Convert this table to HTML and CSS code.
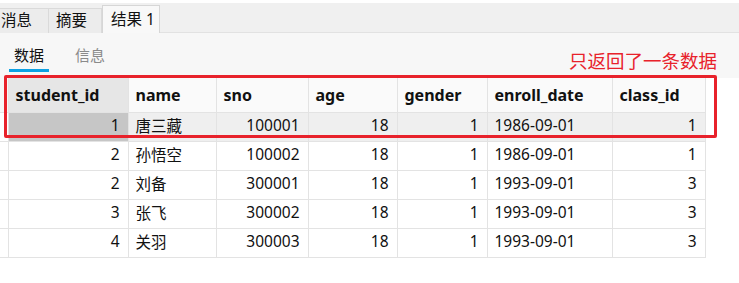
FILE: index.html
```html
<!DOCTYPE html>
<html lang="zh-CN">
<head>
<meta charset="utf-8">
<link rel="stylesheet" href="styles.css">
</head>
<body>
<div class="page">
  <div class="tabbar">
    <div class="tab tab-first">消息</div>
    <div class="tab">摘要</div>
    <div class="tab tab-active">结果 1</div>
  </div>
  <div class="panel">
    <div class="subtabs">
      <div class="subtab subtab-active">数据</div>
      <div class="subtab">信息</div>
    </div>
    <div class="note">只返回了一条数据</div>
  </div>
  <div class="gridwrap">
    <table class="grid">
      <colgroup>
        <col class="c-rh"><col class="c-id"><col class="c-name"><col class="c-sno"><col class="c-age"><col class="c-gender"><col class="c-date"><col class="c-class">
      </colgroup>
      <thead>
        <tr>
          <th class="rh"></th>
          <th class="sorted">student_id</th>
          <th>name</th>
          <th>sno</th>
          <th>age</th>
          <th>gender</th>
          <th>enroll_date</th>
          <th>class_id</th>
        </tr>
      </thead>
      <tbody>
        <tr class="sel">
          <td class="rh"></td>
          <td class="num cur">1</td><td>唐三藏</td><td class="num">100001</td><td class="num">18</td><td class="num">1</td><td>1986-09-01</td><td class="num">1</td>
        </tr>
        <tr>
          <td class="rh"></td>
          <td class="num">2</td><td>孙悟空</td><td class="num">100002</td><td class="num">18</td><td class="num">1</td><td>1986-09-01</td><td class="num">1</td>
        </tr>
        <tr>
          <td class="rh"></td>
          <td class="num">2</td><td>刘备</td><td class="num">300001</td><td class="num">18</td><td class="num">1</td><td>1993-09-01</td><td class="num">3</td>
        </tr>
        <tr>
          <td class="rh"></td>
          <td class="num">3</td><td>张飞</td><td class="num">300002</td><td class="num">18</td><td class="num">1</td><td>1993-09-01</td><td class="num">3</td>
        </tr>
        <tr>
          <td class="rh"></td>
          <td class="num">4</td><td>关羽</td><td class="num">300003</td><td class="num">18</td><td class="num">1</td><td>1993-09-01</td><td class="num">3</td>
        </tr>
      </tbody>
    </table>
    <div class="highlight"></div>
  </div>
</div>
</body>
</html>
```
FILE: styles.css
```css
* { box-sizing: border-box; }
html, body { margin: 0; padding: 0; background: #ffffff; }
body {
  font-family: "Noto Sans", "Noto Sans CJK SC", sans-serif;
  font-size: 15px;
  color: #111;
}
.page { width: 739px; height: 283px; position: relative; overflow: hidden; }

.tabbar {
  margin-top: 3px;
  height: 30px;
  background: #f0f0f0;
  display: flex;
  align-items: flex-end;
  border-bottom: 1px solid #e2e2e2;
}
.tab {
  height: 25px;
  padding: 0 7px;
  display: flex;
  align-items: center;
  background: #ececec;
  border: 1px solid #dadada;
  border-bottom: none;
  border-left: none;
  line-height: 1;
  font-size: 15.5px;
  color: #111;
  white-space: nowrap;
  margin-bottom: -1px;
  flex: none;
}
.tab-first { width: 49px; padding-left: 1px; }
.tab:nth-child(2) { width: 53px; }
.tab-active {
  width: 58px;
  height: 28px;
  background: #f8f8f8;
  border-left: 1px solid #dadada;
  border-color: #d6d6d6;
  padding-left: 8px;
  padding-right: 4px;
}

.panel {
  height: 45px;
  background: #f7f7f7;
  display: flex;
  justify-content: space-between;
  align-items: flex-start;
}
.subtabs { display: flex; padding-left: 9px; }
.subtab {
  height: 39px;
  padding: 15px 5px 0 5px;
  width: 40px;
  text-align: center;
  color: #8a8a8a;
  line-height: 1;
  margin-right: 21px;
  white-space: nowrap;
}
.subtab-active {
  color: #111;
  border-bottom: 3px solid #0ea1e3;
}
.note {
  color: #e8222b;
  font-size: 18.5px;
  line-height: 1;
  padding-top: 18px;
  padding-right: 22px;
  font-family: "Noto Sans CJK SC", sans-serif;
}

.gridwrap { position: relative; }
.grid {
  border-collapse: collapse;
  table-layout: fixed;
  width: 705px;
}
.c-rh { width: 8px; }
.c-id { width: 120px; }
.c-name { width: 88px; }
.c-sno { width: 92px; }
.c-age { width: 89px; }
.c-gender { width: 90px; }
.c-date { width: 125px; }
.c-class { width: 93px; }

.grid th, .grid td {
  border: 1px solid #e3e3e3;
  padding: 0 7px;
  white-space: nowrap;
  overflow: hidden;
}
.grid th {
  height: 34px;
  text-align: left;
  font-weight: bold;
  font-size: 16px;
  background: #fafafa;
  border-top: none;
  color: #111;
  padding-top: 1px;
}
.grid th.sorted { background: #e6e6e6; }
.grid th.rh { background: #f7f7f7; border-left: none; }
.grid td {
  height: 29px;
  background: #fff;
  font-size: 15.5px;
  padding-bottom: 3px;
}
.grid td.rh { border-left: none; }
.grid td.num { text-align: right; padding-right: 8px; }
.grid tr.sel td { background: #efefef; }
.grid tr.sel td.cur { background: #c6c6c6; }
.grid tr.sel td.rh { background: #fff; }

.highlight {
  position: absolute;
  left: 4px;
  top: -3px;
  width: 713px;
  height: 63px;
  border: 3px solid #e8222b;
  border-radius: 2px;
  pointer-events: none;
}
```
